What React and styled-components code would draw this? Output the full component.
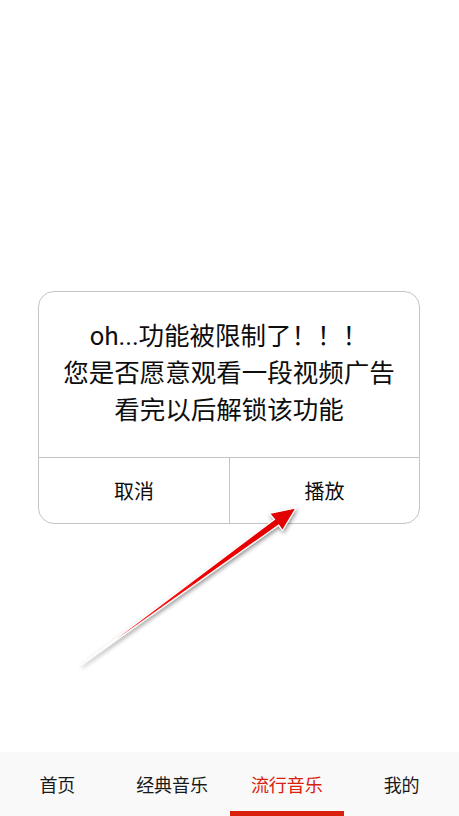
import React, { useState } from 'react';
import styled, { createGlobalStyle } from 'styled-components';

const GlobalStyle = createGlobalStyle`
  html, body {
    margin: 0;
    padding: 0;
    background: #ffffff;
  }
  body {
    font-family: Roboto, "Noto Sans CJK SC", sans-serif;
    color: #111111;
  }
`;

const Screen = styled.div`
  position: relative;
  width: 459px;
  height: 816px;
  display: flex;
  flex-direction: column;
  overflow: hidden;
`;

const Content = styled.main`
  flex: 1;
  padding: 291px 39px 0 38px;
`;

const Dialog = styled.div`
  border: 1px solid #c4c4c4;
  border-radius: 16px;
  overflow: hidden;
  background: #ffffff;
`;

const Message = styled.div`
  padding: 26px 8px 28px;
  text-align: center;
  font-size: 25.5px;
  line-height: 37px;
  color: #0d0d0d;
`;

const Actions = styled.div`
  display: grid;
  grid-template-columns: 1fr 1fr;
  border-top: 1px solid #c4c4c4;
`;

const ActionButton = styled.button`
  height: 65px;
  border: 0;
  border-left: ${(p) => (p.$first ? '0' : '1px solid #c4c4c4')};
  background: transparent;
  font-family: inherit;
  font-size: 20px;
  color: #0d0d0d;
  padding: 0;
  cursor: pointer;
`;

const TabBar = styled.nav`
  height: 64px;
  display: grid;
  grid-template-columns: repeat(4, 1fr);
  background: #f9f9f9;
`;

const Tab = styled.div`
  display: flex;
  align-items: center;
  justify-content: center;
  font-size: 18px;
  color: ${(p) => (p.$active ? '#d8200d' : '#1a1a1a')};
  box-shadow: ${(p) => (p.$active ? 'inset 0 -5px 0 #d8200d' : 'none')};
  cursor: pointer;
`;

const ArrowLayer = styled.svg`
  position: absolute;
  left: 0;
  top: 0;
  width: 459px;
  height: 816px;
  pointer-events: none;
`;

const PointerArrow = () => (
  <ArrowLayer viewBox="0 0 459 816">
    <defs>
      <linearGradient id="arrowFill" x1="81" y1="665" x2="296" y2="508" gradientUnits="userSpaceOnUse">
        <stop offset="0" stopColor="#ff3030" />
        <stop offset="0.6" stopColor="#f00000" />
        <stop offset="1" stopColor="#e00000" />
      </linearGradient>
      <filter id="arrowShadow" x="-20%" y="-20%" width="140%" height="140%">
        <feDropShadow dx="1" dy="2" stdDeviation="2" floodColor="#000" floodOpacity="0.45" />
      </filter>
    </defs>
    <polygon
      points="296,508 282.5,530.5 278.7,525 81,665 274.5,519.4 269.5,513.5"
      fill="url(#arrowFill)"
      stroke="#ffffff"
      strokeWidth="1.2"
      strokeLinejoin="miter"
      filter="url(#arrowShadow)"
    />
  </ArrowLayer>
);

const tabs = ['首页', '经典音乐', '流行音乐', '我的'];

export default function App() {
  const [active, setActive] = useState(2);
  return (
    <Screen>
      <GlobalStyle />
      <Content>
        <Dialog>
          <Message>
            <div>oh...功能被限制了！！！</div>
            <div>您是否愿意观看一段视频广告</div>
            <div>看完以后解锁该功能</div>
          </Message>
          <Actions>
            <ActionButton $first>取消</ActionButton>
            <ActionButton>播放</ActionButton>
          </Actions>
        </Dialog>
      </Content>
      <TabBar>
        {tabs.map((t, i) => (
          <Tab key={t} $active={i === active} onClick={() => setActive(i)}>
            {t}
          </Tab>
        ))}
      </TabBar>
      <PointerArrow />
    </Screen>
  );
}
